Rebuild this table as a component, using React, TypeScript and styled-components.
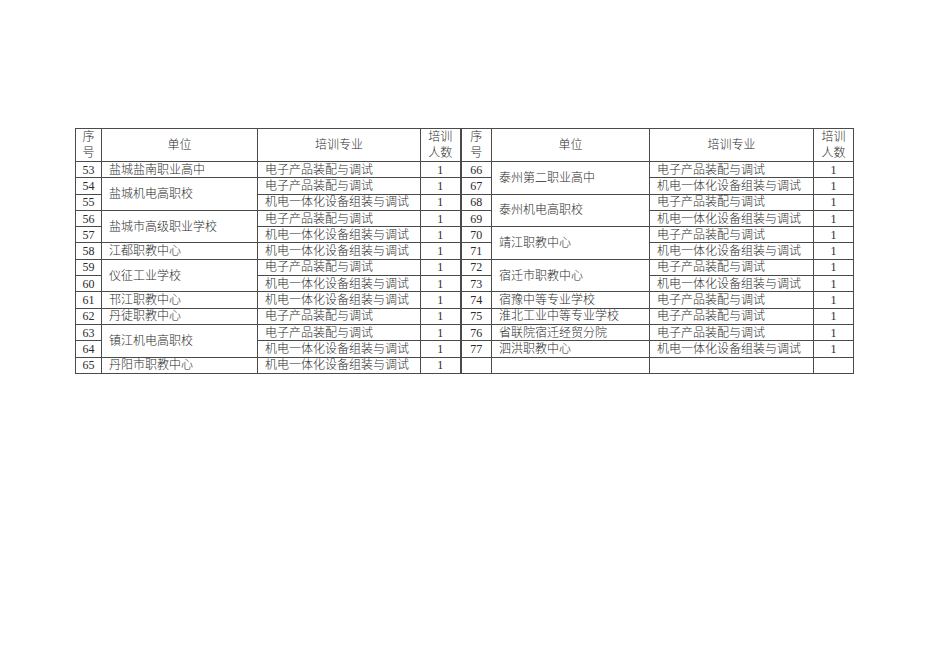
import React from "react";
import styled, { createGlobalStyle } from "styled-components";

const GlobalStyle = createGlobalStyle`
  html, body {
    margin: 0;
    padding: 0;
    background: #ffffff;
  }
`;

const E = "电子产品装配与调试";
const M = "机电一体化设备组装与调试";

type Group = { unit: string; items: [string, string, string][] };

const leftGroups: Group[] = [
  { unit: "盐城盐南职业高中", items: [["53", E, "1"]] },
  { unit: "盐城机电高职校", items: [["54", E, "1"], ["55", M, "1"]] },
  { unit: "盐城市高级职业学校", items: [["56", E, "1"], ["57", M, "1"]] },
  { unit: "江都职教中心", items: [["58", M, "1"]] },
  { unit: "仪征工业学校", items: [["59", E, "1"], ["60", M, "1"]] },
  { unit: "邗江职教中心", items: [["61", M, "1"]] },
  { unit: "丹徒职教中心", items: [["62", E, "1"]] },
  { unit: "镇江机电高职校", items: [["63", E, "1"], ["64", M, "1"]] },
  { unit: "丹阳市职教中心", items: [["65", M, "1"]] },
];

const rightGroups: Group[] = [
  { unit: "泰州第二职业高中", items: [["66", E, "1"], ["67", M, "1"]] },
  { unit: "泰州机电高职校", items: [["68", E, "1"], ["69", M, "1"]] },
  { unit: "靖江职教中心", items: [["70", E, "1"], ["71", M, "1"]] },
  { unit: "宿迁市职教中心", items: [["72", E, "1"], ["73", M, "1"]] },
  { unit: "宿豫中等专业学校", items: [["74", E, "1"]] },
  { unit: "淮北工业中等专业学校", items: [["75", E, "1"]] },
  { unit: "省联院宿迁经贸分院", items: [["76", E, "1"]] },
  { unit: "泗洪职教中心", items: [["77", M, "1"]] },
  { unit: "", items: [["", "", ""]] },
];

type Cell = { no: string; unit?: string; span?: number; major: string; count: string };

const flatten = (groups: Group[]): Cell[] => {
  const out: Cell[] = [];
  groups.forEach((g) => {
    g.items.forEach(([no, major, count], i) => {
      out.push(
        i === 0
          ? { no, unit: g.unit, span: g.items.length, major, count }
          : { no, major, count }
      );
    });
  });
  return out;
};

const left = flatten(leftGroups);
const right = flatten(rightGroups);

const widths = [26, 156, 163, 40, 31, 158, 164, 40];

const Page = styled.div`
  padding: 128px 0 0 75px;
  font-family: "Liberation Serif", "Noto Sans CJK SC", serif;
  color: #2a2a2a;
`;

const Sheet = styled.table`
  border-collapse: collapse;
  table-layout: fixed;
  width: 778px;
  font-size: 12px;
  line-height: 14px;
`;

const Head = styled.th<{ $split?: boolean }>`
  height: 32px;
  padding: 0;
  font-weight: 300;
  line-height: 16px;
  text-align: center;
  vertical-align: middle;
  border: 1px solid #4a4a4a;
  border-left-width: ${(p) => (p.$split ? "2px" : "1px")};
`;

const Td = styled.td<{ $align?: "left" | "center"; $split?: boolean }>`
  height: 15.3px;
  padding: 0 0 0 ${(p) => (p.$align === "left" ? "7px" : "0")};
  font-weight: 300;
  text-align: ${(p) => p.$align || "center"};
  vertical-align: middle;
  white-space: nowrap;
  overflow: hidden;
  border: 1px solid #4a4a4a;
  border-left-width: ${(p) => (p.$split ? "2px" : "1px")};
`;

const Half = ({ c, split }: { c: Cell; split?: boolean }) => (
  <>
    <Td $split={split}>{c.no}</Td>
    {c.span !== undefined && (
      <Td $align="left" rowSpan={c.span}>
        {c.unit}
      </Td>
    )}
    <Td $align="left">{c.major}</Td>
    <Td>{c.count}</Td>
  </>
);

export default function App() {
  return (
    <Page>
      <GlobalStyle />
      <Sheet>
        <colgroup>
          {widths.map((w, i) => (
            <col key={i} style={{ width: w }} />
          ))}
        </colgroup>
        <thead>
          <tr>
            <Head>序<br />号</Head>
            <Head>单位</Head>
            <Head>培训专业</Head>
            <Head>培训<br />人数</Head>
            <Head $split>序<br />号</Head>
            <Head>单位</Head>
            <Head>培训专业</Head>
            <Head>培训<br />人数</Head>
          </tr>
        </thead>
        <tbody>
          {left.map((c, i) => (
            <tr key={i}>
              <Half c={c} />
              <Half c={right[i]} split />
            </tr>
          ))}
        </tbody>
      </Sheet>
    </Page>
  );
}
